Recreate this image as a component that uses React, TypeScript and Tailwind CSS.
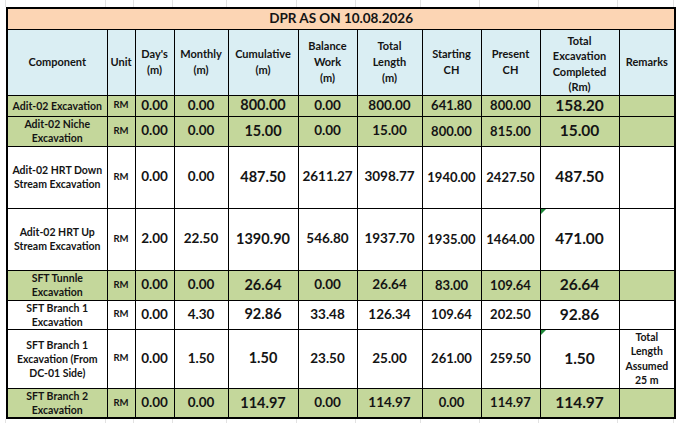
import React from "react";

// Excel-style DPR sheet

type Row = {
  name: string;
  vals: string[];
  green?: boolean;
  h: string;
  remark?: string;
  flag?: boolean;
};

const ROWS: Row[] = [
  { name: "Adit-02 Excavation", vals: ["0.00", "0.00", "800.00", "0.00", "800.00", "641.80", "800.00", "158.20"], green: true, h: "h-[21px]" },
  { name: "Adit-02  Niche\nExcavation", vals: ["0.00", "0.00", "15.00", "0.00", "15.00", "800.00", "815.00", "15.00"], green: true, h: "h-[30px]" },
  { name: "Adit-02 HRT Down\nStream Excavation", vals: ["0.00", "0.00", "487.50", "2611.27", "3098.77", "1940.00", "2427.50", "487.50"], h: "h-[62px]" },
  { name: "Adit-02 HRT Up\nStream Excavation", vals: ["2.00", "22.50", "1390.90", "546.80", "1937.70", "1935.00", "1464.00", "471.00"], h: "h-[62px]", flag: true },
  { name: "SFT Tunnle\nExcavation", vals: ["0.00", "0.00", "26.64", "0.00", "26.64", "83.00", "109.64", "26.64"], green: true, h: "h-[30px]" },
  { name: "SFT Branch 1\nExcavation", vals: ["0.00", "4.30", "92.86", "33.48", "126.34", "109.64", "202.50", "92.86"], h: "h-[29px]" },
  { name: "SFT Branch 1\nExcavation (From\nDC-01 Side)", vals: ["0.00", "1.50", "1.50", "23.50", "25.00", "261.00", "259.50", "1.50"], h: "h-[59px]", flag: true, remark: "Total\nLength\nAssumed\n25 m" },
  { name: "SFT Branch 2\nExcavation", vals: ["0.00", "0.00", "114.97", "0.00", "114.97", "0.00", "114.97", "114.97"], green: true, h: "h-[30px]" },
];

const NUM_SIZE = [
  "text-[13.5px]",
  "text-[13.5px]",
  "text-[14.5px]",
  "text-[13.5px]",
  "text-[13.5px]",
  "text-[13px]",
  "text-[13px]",
  "text-[15.5px]",
];

const HEADERS = [
  "Component",
  "Unit",
  "Day's\n(m)",
  "Monthly\n(m)",
  "Cumulative\n(m)",
  "Balance\nWork\n(m)",
  "Total\nLength\n(m)",
  "Starting\nCH",
  "Present\nCH",
  "Total\nExcavation\nCompleted\n(Rm)",
  "Remarks",
];

function GridStrip({ h }: { h: string }) {
  const widths = [
    "w-[6px]", "w-[100px]", "w-[28px]", "w-[39px]", "w-[54px]", "w-[70px]",
    "w-[59px]", "w-[65px]", "w-[59px]", "w-[59px]", "w-[79px]", "w-[56px]",
  ];
  return (
    <div className={`flex ${h}`}>
      {widths.map((w, i) => (
        <div key={i} className={`${w} shrink-0 border-r border-[#e2e2e2]`} />
      ))}
    </div>
  );
}

export default function App() {
  return (
    <div className="w-[680px] h-[423px] overflow-hidden bg-white font-['Lato',sans-serif] text-[#141414]">
      <GridStrip h="h-[7px]" />
      <div className="flex">
        <div className="w-[6px] shrink-0" />
        <table className="table-fixed border-collapse border-2 border-black w-[668px] font-bold">
          <colgroup>
            <col className="w-[100px]" />
            <col className="w-[28px]" />
            <col className="w-[39px]" />
            <col className="w-[54px]" />
            <col className="w-[70px]" />
            <col className="w-[59px]" />
            <col className="w-[65px]" />
            <col className="w-[59px]" />
            <col className="w-[59px]" />
            <col className="w-[79px]" />
            <col className="w-[56px]" />
          </colgroup>
          <tbody>
            {/* Title */}
            <tr className="h-[21px]">
              <td colSpan={11} className="border border-black bg-[#fcd5b4] text-center text-[13.5px] leading-none p-0">
                DPR AS ON 10.08.2026
              </td>
            </tr>

            {/* Header */}
            <tr className="h-[64px] bg-[#daeef3]">
              {HEADERS.map((t, i) => (
                <td
                  key={i}
                  className={`border border-black p-0 text-center whitespace-pre-line text-[11px] ${
                    i === 9 ? "leading-[15.5px] pt-[3px]" : "leading-[16px]"
                  }`}
                >
                  {t}
                </td>
              ))}
            </tr>

            {ROWS.map((r, ri) => (
              <tr key={ri} className={`${r.h} ${r.green ? "bg-[#c4d79b]" : "bg-white"}`}>
                <td className="border border-black p-0 px-px text-center whitespace-pre-line text-[10.5px] leading-[14px] overflow-hidden">
                  {r.name}
                </td>
                <td className="border border-black p-0 text-center text-[9.5px]">RM</td>
                {r.vals.map((v, vi) => (
                  <td
                    key={vi}
                    className={`border border-black p-0 text-center leading-none whitespace-nowrap ${NUM_SIZE[vi]} ${
                      vi === 7 ? "relative" : ""
                    }`}
                  >
                    {vi === 7 && r.flag && (
                      <span className="absolute left-0 top-0 w-0 h-0 border-t-[5px] border-r-[5px] border-t-[#1f8a3a] border-r-transparent" />
                    )}
                    {v}
                  </td>
                ))}
                <td className="border border-black p-0 text-center whitespace-pre-line text-[10.5px] leading-[14.5px]">
                  {r.remark ?? ""}
                </td>
              </tr>
            ))}
          </tbody>
        </table>
        <div className="flex-1" />
      </div>
      <GridStrip h="h-[12px]" />
    </div>
  );
}
